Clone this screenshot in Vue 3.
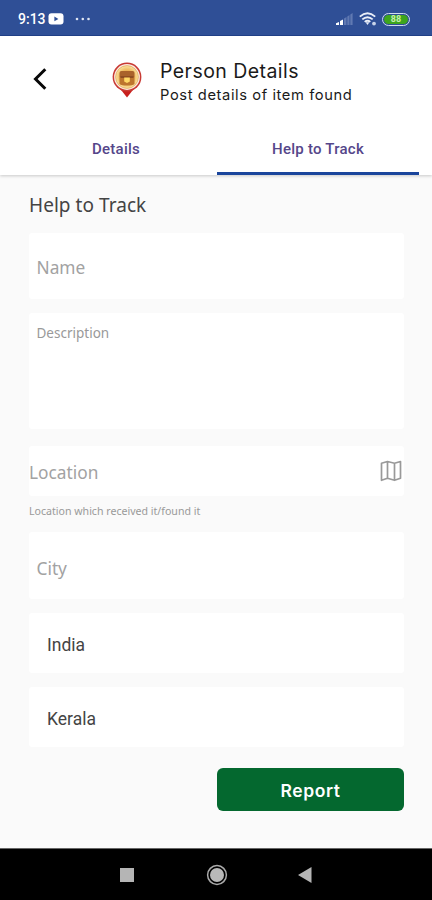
<script setup>
import { ref } from 'vue'

const tabs = ['Details', 'Help to Track']
const active = ref(1)
const selects = ['India', 'Kerala']
</script>

<template>
  <div class="screen">
    <header class="status">
      <span class="time">9:13</span>
      <svg class="video" width="16" height="12" viewBox="0 0 16 12">
        <rect x="0.5" y="0.3" width="15" height="11.2" rx="3" fill="#fff" />
        <path d="M6.4 3.6 10.4 5.9 6.4 8.2z" fill="#2f4f96" />
      </svg>
      <svg class="more" width="16" height="4" viewBox="0 0 16 4" fill="#dfe5f3">
        <circle cx="2" cy="2" r="1.3" /><circle cx="7.8" cy="2" r="1.3" /><circle cx="13.5" cy="2" r="1.3" />
      </svg>
      <svg class="signal" width="17" height="12" viewBox="0 0 17 12">
        <path d="M0 12V10.3L3 9v3zM4 12V8l3-1.600V12z" fill="#fff" />
        <path d="M8 12V5.600l2.500-1.600v8zM11.300 12V3.400l2.200-1.400v10zM14.300 12V1.500L16.600 0v12z" fill="#6079b2" />
      </svg>
      <svg class="wifi" width="18" height="14" viewBox="0 0 18 14" fill="none" stroke="#e9eef8" stroke-width="1.9">
        <path d="M.8 4.600Q8.500-2 16.200 4.600M3.300 7.400Q8.500 2.900 13.700 7.400M5.700 9.900Q8.500 7.500 11.300 9.900" />
        <path d="M6.600 10.300h3.800L8.500 13z" fill="#e9eef8" stroke="none" />
        <circle cx="15" cy="11.600" r="1.900" fill="#c9d4ea" stroke="none" />
      </svg>
      <span class="battery"><span class="charge">88</span></span>
    </header>

    <section class="appbar">
      <svg class="back" width="14" height="22" viewBox="0 0 14 22" fill="none" stroke="#080808" stroke-width="3">
        <path d="M12.300 1.200 2.500 11l9.800 9.800" />
      </svg>
      <svg class="pin" width="30" height="36" viewBox="0 0 30 36">
        <defs>
          <radialGradient id="pinGlow">
            <stop offset="0.4" stop-color="#e9a03a" />
            <stop offset="1" stop-color="#fae4a0" />
          </radialGradient>
        </defs>
        <path d="M7.500 26h15L15 35.500z" fill="#c8201d" />
        <circle cx="15" cy="15" r="14.400" fill="#c83a34" />
        <circle cx="15" cy="15" r="12.900" fill="#fdebe0" />
        <circle cx="15" cy="15" r="11.400" fill="url(#pinGlow)" stroke="#d69648" stroke-width=".6" />
        <path d="M7.500 11q0-2 2-2h11q2 0 2 2v4h-15z" fill="#a9622b" />
        <path d="M7.500 15h15v7q-2 1.500-7.500 1.500T7.500 22z" fill="#bd752e" />
        <path d="M8.500 14h13v2h-13z" fill="#8f4d22" />
        <path d="M12.200 15.500h5.600v4L15 21l-2.800-1.500z" fill="#ffd866" />
      </svg>
      <div class="titles">
        <div class="title">Person Details</div>
        <div class="subtitle">Post details of item found</div>
      </div>
    </section>

    <nav class="tabs">
      <button v-for="(tab, i) in tabs" :key="tab" class="tab" :class="{ active: active === i }" @click="active = i">
        {{ tab }}
      </button>
    </nav>

    <main class="form">
      <h1 class="heading">Help to Track</h1>
      <div class="field name">Name</div>
      <div class="field description">Description</div>
      <div class="field location">
        <span>Location</span>
        <svg class="map" width="22" height="22" viewBox="0 0 22 22" fill="none" stroke="#999" stroke-width="1.700" stroke-linejoin="round">
          <path d="M1.500 3.300 7.500 1.500 14.500 3.300 20.500 1.500V18.300L14.500 20.300 7.500 18.300 1.500 20.300zM7.500 1.500V18.300M14.500 3.300V20.300" />
        </svg>
      </div>
      <div class="hint">Location which received it/found it</div>
      <div class="field city">City</div>
      <div v-for="s in selects" :key="s" class="field select">{{ s }}</div>
      <button class="report">Report</button>
    </main>

    <footer class="navbar">
      <svg width="14" height="14" viewBox="0 0 14 14"><rect width="14" height="14" fill="#b5b5b5" /></svg>
      <svg width="22" height="22" viewBox="0 0 22 22">
        <circle cx="11" cy="11" r="9.400" fill="none" stroke="#aaa" stroke-width="1.500" />
        <circle cx="11" cy="11" r="7" fill="#b9b9b9" />
      </svg>
      <svg width="14" height="16" viewBox="0 0 14 16"><path d="M0 8 13.500 0v16z" fill="#b5b5b5" /></svg>
    </footer>
  </div>
</template>

<style>
body {
  margin: 0;
}
</style>

<style scoped>
.screen {
  width: 432px;
  height: 900px;
  display: flex;
  flex-direction: column;
  overflow: hidden;
  background: #fafafa;
  font-family: Roboto, "Liberation Sans", sans-serif;
}
button {
  border: 0;
  padding: 0;
  font-family: inherit;
}
.status {
  height: 36px;
  box-sizing: border-box;
  flex: none;
  display: flex;
  align-items: center;
  padding: 3px 22px 0 18px;
  background: #2f4f96;
  border-bottom: 1px solid #203f86;
  color: #fff;
}
.time {
  width: 30px;
  font-size: 14px;
  font-weight: 500;
  white-space: nowrap;
}
.more {
  margin-left: 11px;
}
.signal {
  margin-left: auto;
}
.wifi {
  margin-left: 6px;
}
.battery {
  box-sizing: border-box;
  width: 28px;
  height: 13px;
  margin-left: 5px;
  padding: 1px;
  border: 1.5px solid #cfdcee;
  border-radius: 7px;
  display: flex;
}
.charge {
  flex: 1;
  border-radius: 5px;
  background: #3da51c;
  font-size: 9px;
  font-weight: 700;
  line-height: 9px;
  text-align: center;
  color: #c4eeb0;
}
.appbar {
  height: 87px;
  flex: none;
  display: flex;
  align-items: center;
  padding-left: 33px;
  background: #fff;
}
.back {
  margin-bottom: 1px;
}
.pin {
  margin-left: 65px;
}
.titles {
  margin-left: 18px;
  padding-top: 4px;
  color: #1a1a1a;
  font-family: Inter, sans-serif;
  white-space: nowrap;
}
.title {
  font-size: 19.5px;
  line-height: 26px;
  letter-spacing: 0.45px;
}
.subtitle {
  font-size: 14.7px;
  line-height: 22px;
  letter-spacing: 0.6px;
}
.tabs {
  height: 52px;
  box-sizing: border-box;
  flex: none;
  display: flex;
  padding: 0 13px 0 15px;
  background: #fff;
  box-shadow: 0 1px 3px rgba(0, 0, 0, 0.2);
  clip-path: inset(0 0 -6px 0);
}
.tab {
  flex: 1;
  padding-top: 3px;
  border-bottom: 3px solid transparent;
  background: none;
  color: #55468a;
  font-size: 15px;
  font-weight: 500;
  letter-spacing: 0.25px;
}
.tab.active {
  border-bottom-color: #1a459c;
}
.form {
  flex: 1;
  display: flex;
  flex-direction: column;
  padding: 0 28px 0 29px;
  font-family: "Noto Sans", sans-serif;
}
.heading {
  margin: 15px 0 13px;
  font-size: 19px;
  font-weight: 400;
  line-height: 30px;
  letter-spacing: 0.05px;
  color: #444;
}
.field {
  box-sizing: border-box;
  padding: 2px 7.5px 0;
  background: #fff;
  border-radius: 3px;
  display: flex;
  align-items: center;
  font-size: 17.3px;
  color: #a2a2a2;
}
.name {
  height: 66px;
}
.description {
  height: 116px;
  margin-top: 14px;
  padding-top: 10px;
  align-items: flex-start;
  font-size: 13.5px;
  line-height: 20px;
  color: #999;
}
.location {
  height: 50px;
  margin-top: 17px;
  padding: 2px 2px 0 0;
  justify-content: space-between;
}
.map {
  margin-bottom: 2px;
}
.hint {
  height: 36px;
  line-height: 30px;
  font-size: 10.6px;
  color: #999;
}
.city {
  height: 67px;
  padding-top: 5px;
}
.select {
  height: 60px;
  margin-top: 14px;
  padding-top: 3px;
  padding-left: 18px;
  font-family: Roboto, sans-serif;
  font-size: 17.5px;
  color: #444;
}
.report {
  align-self: flex-end;
  width: 187px;
  height: 43px;
  margin-top: 21px;
  padding-top: 2px;
  border-radius: 6px;
  background: #04682f;
  color: #fff;
  font-family: Inter, sans-serif;
  font-size: 17.5px;
  font-weight: 600;
  letter-spacing: 0.6px;
}
.navbar {
  height: 52px;
  box-sizing: border-box;
  flex: none;
  display: flex;
  align-items: center;
  padding-left: 120px;
  background: #000;
  border-top: 1px solid #666;
}
.navbar svg:nth-child(2) {
  margin-left: 72px;
}
.navbar svg:nth-child(3) {
  margin-left: 70px;
}
</style>
